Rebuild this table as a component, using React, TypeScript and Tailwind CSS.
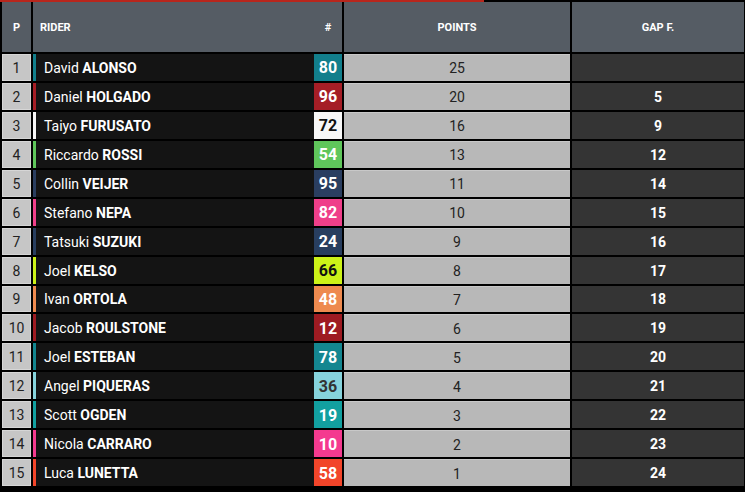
const riders = [
  { pos: 1, first: 'David', last: 'ALONSO', num: 80, color: '#127f8c', text: '#ffffff', pts: 25, gap: '' },
  { pos: 2, first: 'Daniel', last: 'HOLGADO', num: 96, color: '#a51e26', text: '#ffffff', pts: 20, gap: '5' },
  { pos: 3, first: 'Taiyo', last: 'FURUSATO', num: 72, color: '#f7f7f7', text: '#111111', pts: 16, gap: '9' },
  { pos: 4, first: 'Riccardo', last: 'ROSSI', num: 54, color: '#5fc65b', text: '#ffffff', pts: 13, gap: '12' },
  { pos: 5, first: 'Collin', last: 'VEIJER', num: 95, color: '#2a3e60', text: '#ffffff', pts: 11, gap: '14' },
  { pos: 6, first: 'Stefano', last: 'NEPA', num: 82, color: '#ef3f8a', text: '#ffffff', pts: 10, gap: '15' },
  { pos: 7, first: 'Tatsuki', last: 'SUZUKI', num: 24, color: '#283e5f', text: '#ffffff', pts: 9, gap: '16' },
  { pos: 8, first: 'Joel', last: 'KELSO', num: 66, color: '#ccf218', text: '#111111', pts: 8, gap: '17' },
  { pos: 9, first: 'Ivan', last: 'ORTOLA', num: 48, color: '#ee8a4f', text: '#ffffff', pts: 7, gap: '18' },
  { pos: 10, first: 'Jacob', last: 'ROULSTONE', num: 12, color: '#9e1b22', text: '#ffffff', pts: 6, gap: '19' },
  { pos: 11, first: 'Joel', last: 'ESTEBAN', num: 78, color: '#148690', text: '#ffffff', pts: 5, gap: '20' },
  { pos: 12, first: 'Angel', last: 'PIQUERAS', num: 36, color: '#86d3dc', text: '#333333', pts: 4, gap: '21' },
  { pos: 13, first: 'Scott', last: 'OGDEN', num: 19, color: '#12a0a0', text: '#ffffff', pts: 3, gap: '22' },
  { pos: 14, first: 'Nicola', last: 'CARRARO', num: 10, color: '#f43a8f', text: '#ffffff', pts: 2, gap: '23' },
  { pos: 15, first: 'Luca', last: 'LUNETTA', num: 58, color: '#f2452a', text: '#ffffff', pts: 1, gap: '24' },
];

const cols = 'grid grid-cols-[29px_309px_226px_172px] gap-x-[2px]';

const App = () => {
  return (
    <div className="w-[745px] h-[492px] bg-black overflow-hidden" style={{ fontFamily: 'Roboto, "Liberation Sans", sans-serif' }}>
      <div className="h-[2px] w-[484px] bg-[#b8261c]" />
      <div className="pl-[2px]">
        {/* header */}
        <div className={`${cols} h-[50px] text-white text-[11px] font-bold`}>
          <div className="bg-[#555c64] flex items-center justify-center pt-[2px]">P</div>
          <div className="bg-[#555c64] flex items-center pt-[2px]">
            <span className="flex-1 pl-[7px]">RIDER</span>
            <span className="w-[28px] text-center">#</span>
          </div>
          <div className="bg-[#555c64] flex items-center justify-center pt-[2px]">POINTS</div>
          <div className="bg-[#555c64] flex items-center justify-center pt-[2px]">GAP F.</div>
        </div>

        {/* body */}
        <div className="mt-[2px] h-[432px] flex flex-col gap-[2px]">
          {riders.map((r) => (
            <div key={r.pos} className={`${cols} flex-1 text-[14px]`}>
              <div className="bg-[#c6c6c6] border border-[#d6d6d6] flex items-center justify-center pt-[2px] text-[#222]">{r.pos}</div>
              <div className="flex">
                <div className="w-[3px]" style={{ backgroundColor: r.color }} />
                <div className="flex-1 bg-[#141414] flex items-center pl-[8px] pt-[2px] text-white">
                  <span>{r.first}&nbsp;</span>
                  <span className="font-bold">{r.last}</span>
                </div>
                <div
                  className="w-[28px] flex items-center justify-center pt-[2px] text-[16px] font-bold"
                  style={{ backgroundColor: r.color, color: r.text }}
                >
                  {r.num}
                </div>
              </div>
              <div className="bg-[#b8b8b8] border-t border-[#c8c8c8] flex items-center justify-center pt-[2px] text-[#222]">{r.pts}</div>
              <div className="bg-[#343434] flex items-center justify-center pt-[2px] text-white font-bold">{r.gap}</div>
            </div>
          ))}
        </div>
      </div>
    </div>
  );
};

export default App;
